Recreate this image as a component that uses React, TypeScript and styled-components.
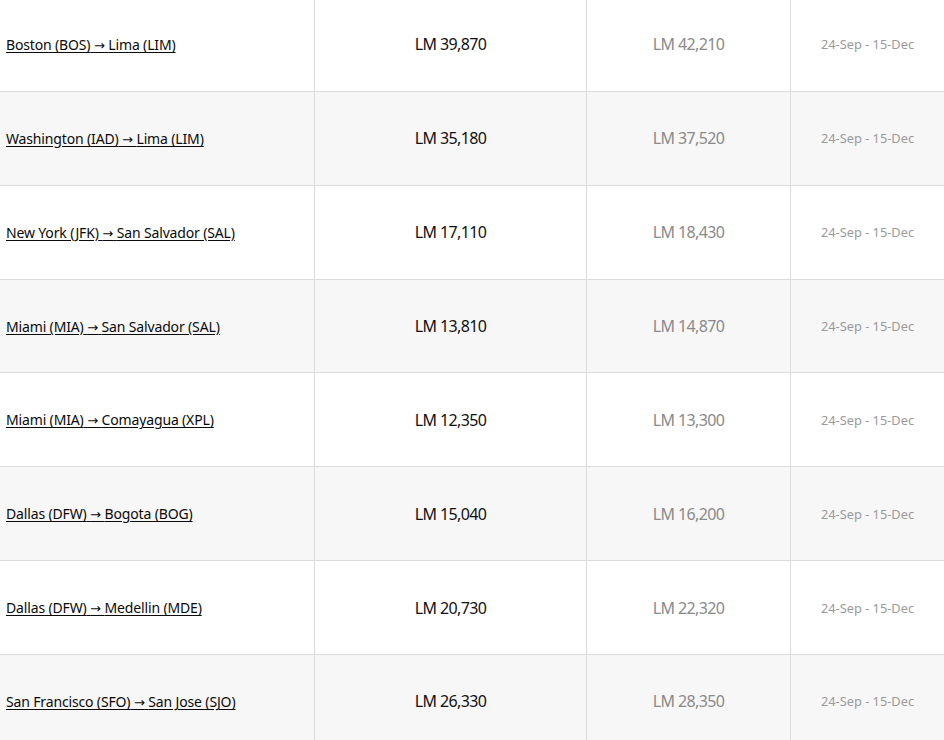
import React from "react";
import styled, { createGlobalStyle } from "styled-components";

const Global = createGlobalStyle`
  html, body { margin: 0; padding: 0; background: #fff; }
  body { font-family: "Noto Sans", "Liberation Sans", sans-serif; overflow: hidden; }
`;

const Table = styled.div`
  margin-top: -2px;
  width: 944px;
  display: flex;
  flex-direction: column;
`;

const Row = styled.div<{ $alt: boolean }>`
  display: grid;
  grid-template-columns: 315px 272px 204px 153px;
  height: 93.86px;
  flex-shrink: 0;
  box-sizing: border-box;
  border-bottom: 1px solid #dcdcdc;
  background: ${(p) => (p.$alt ? "#f7f7f7" : "#fff")};
`;

const Cell = styled.div<{ $last?: boolean; $align?: "left" | "center" }>`
  display: flex;
  align-items: center;
  justify-content: ${(p) => (p.$align === "left" ? "flex-start" : "center")};
  padding-left: ${(p) => (p.$align === "left" ? "6px" : "0")};
  box-sizing: border-box;
  border-right: ${(p) => (p.$last ? "none" : "1px solid #dcdcdc")};
`;

const RouteLink = styled.a`
  font-family: "Noto Sans", sans-serif;
  font-size: 14px;
  letter-spacing: -0.15px;
  color: #0a0a0a;
  text-decoration: underline;
  text-underline-offset: 2px;
  cursor: pointer;
`;

const Arrow = styled.span`
  font-family: "DejaVu Sans", sans-serif;
  font-size: 13px;
  letter-spacing: 0;
`;

const Price = styled.span<{ $muted?: boolean }>`
  font-family: "Noto Sans", sans-serif;
  font-size: 16px;
  letter-spacing: -0.6px;
  color: ${(p) => (p.$muted ? "#8a8a8a" : "#111")};
`;

const Dates = styled.span`
  font-family: "Noto Sans", sans-serif;
  font-size: 12.8px;
  letter-spacing: 0;
  color: #9a9a9a;
`;

const rows = [
  ["Boston (BOS)", "Lima (LIM)", "LM 39,870", "LM 42,210"],
  ["Washington (IAD)", "Lima (LIM)", "LM 35,180", "LM 37,520"],
  ["New York (JFK)", "San Salvador (SAL)", "LM 17,110", "LM 18,430"],
  ["Miami (MIA)", "San Salvador (SAL)", "LM 13,810", "LM 14,870"],
  ["Miami (MIA)", "Comayagua (XPL)", "LM 12,350", "LM 13,300"],
  ["Dallas (DFW)", "Bogota (BOG)", "LM 15,040", "LM 16,200"],
  ["Dallas (DFW)", "Medellin (MDE)", "LM 20,730", "LM 22,320"],
  ["San Francisco (SFO)", "San Jose (SJO)", "LM 26,330", "LM 28,350"],
];

export default function App() {
  return (
    <>
      <Global />
      <Table>
        {rows.map(([from, to, p1, p2], i) => (
          <Row key={i} $alt={i % 2 === 1}>
            <Cell $align="left">
              <RouteLink>
                {from} <Arrow>→</Arrow> {to}
              </RouteLink>
            </Cell>
            <Cell>
              <Price>{p1}</Price>
            </Cell>
            <Cell>
              <Price $muted>{p2}</Price>
            </Cell>
            <Cell $last>
              <Dates>24-Sep - 15-Dec</Dates>
            </Cell>
          </Row>
        ))}
      </Table>
    </>
  );
}
